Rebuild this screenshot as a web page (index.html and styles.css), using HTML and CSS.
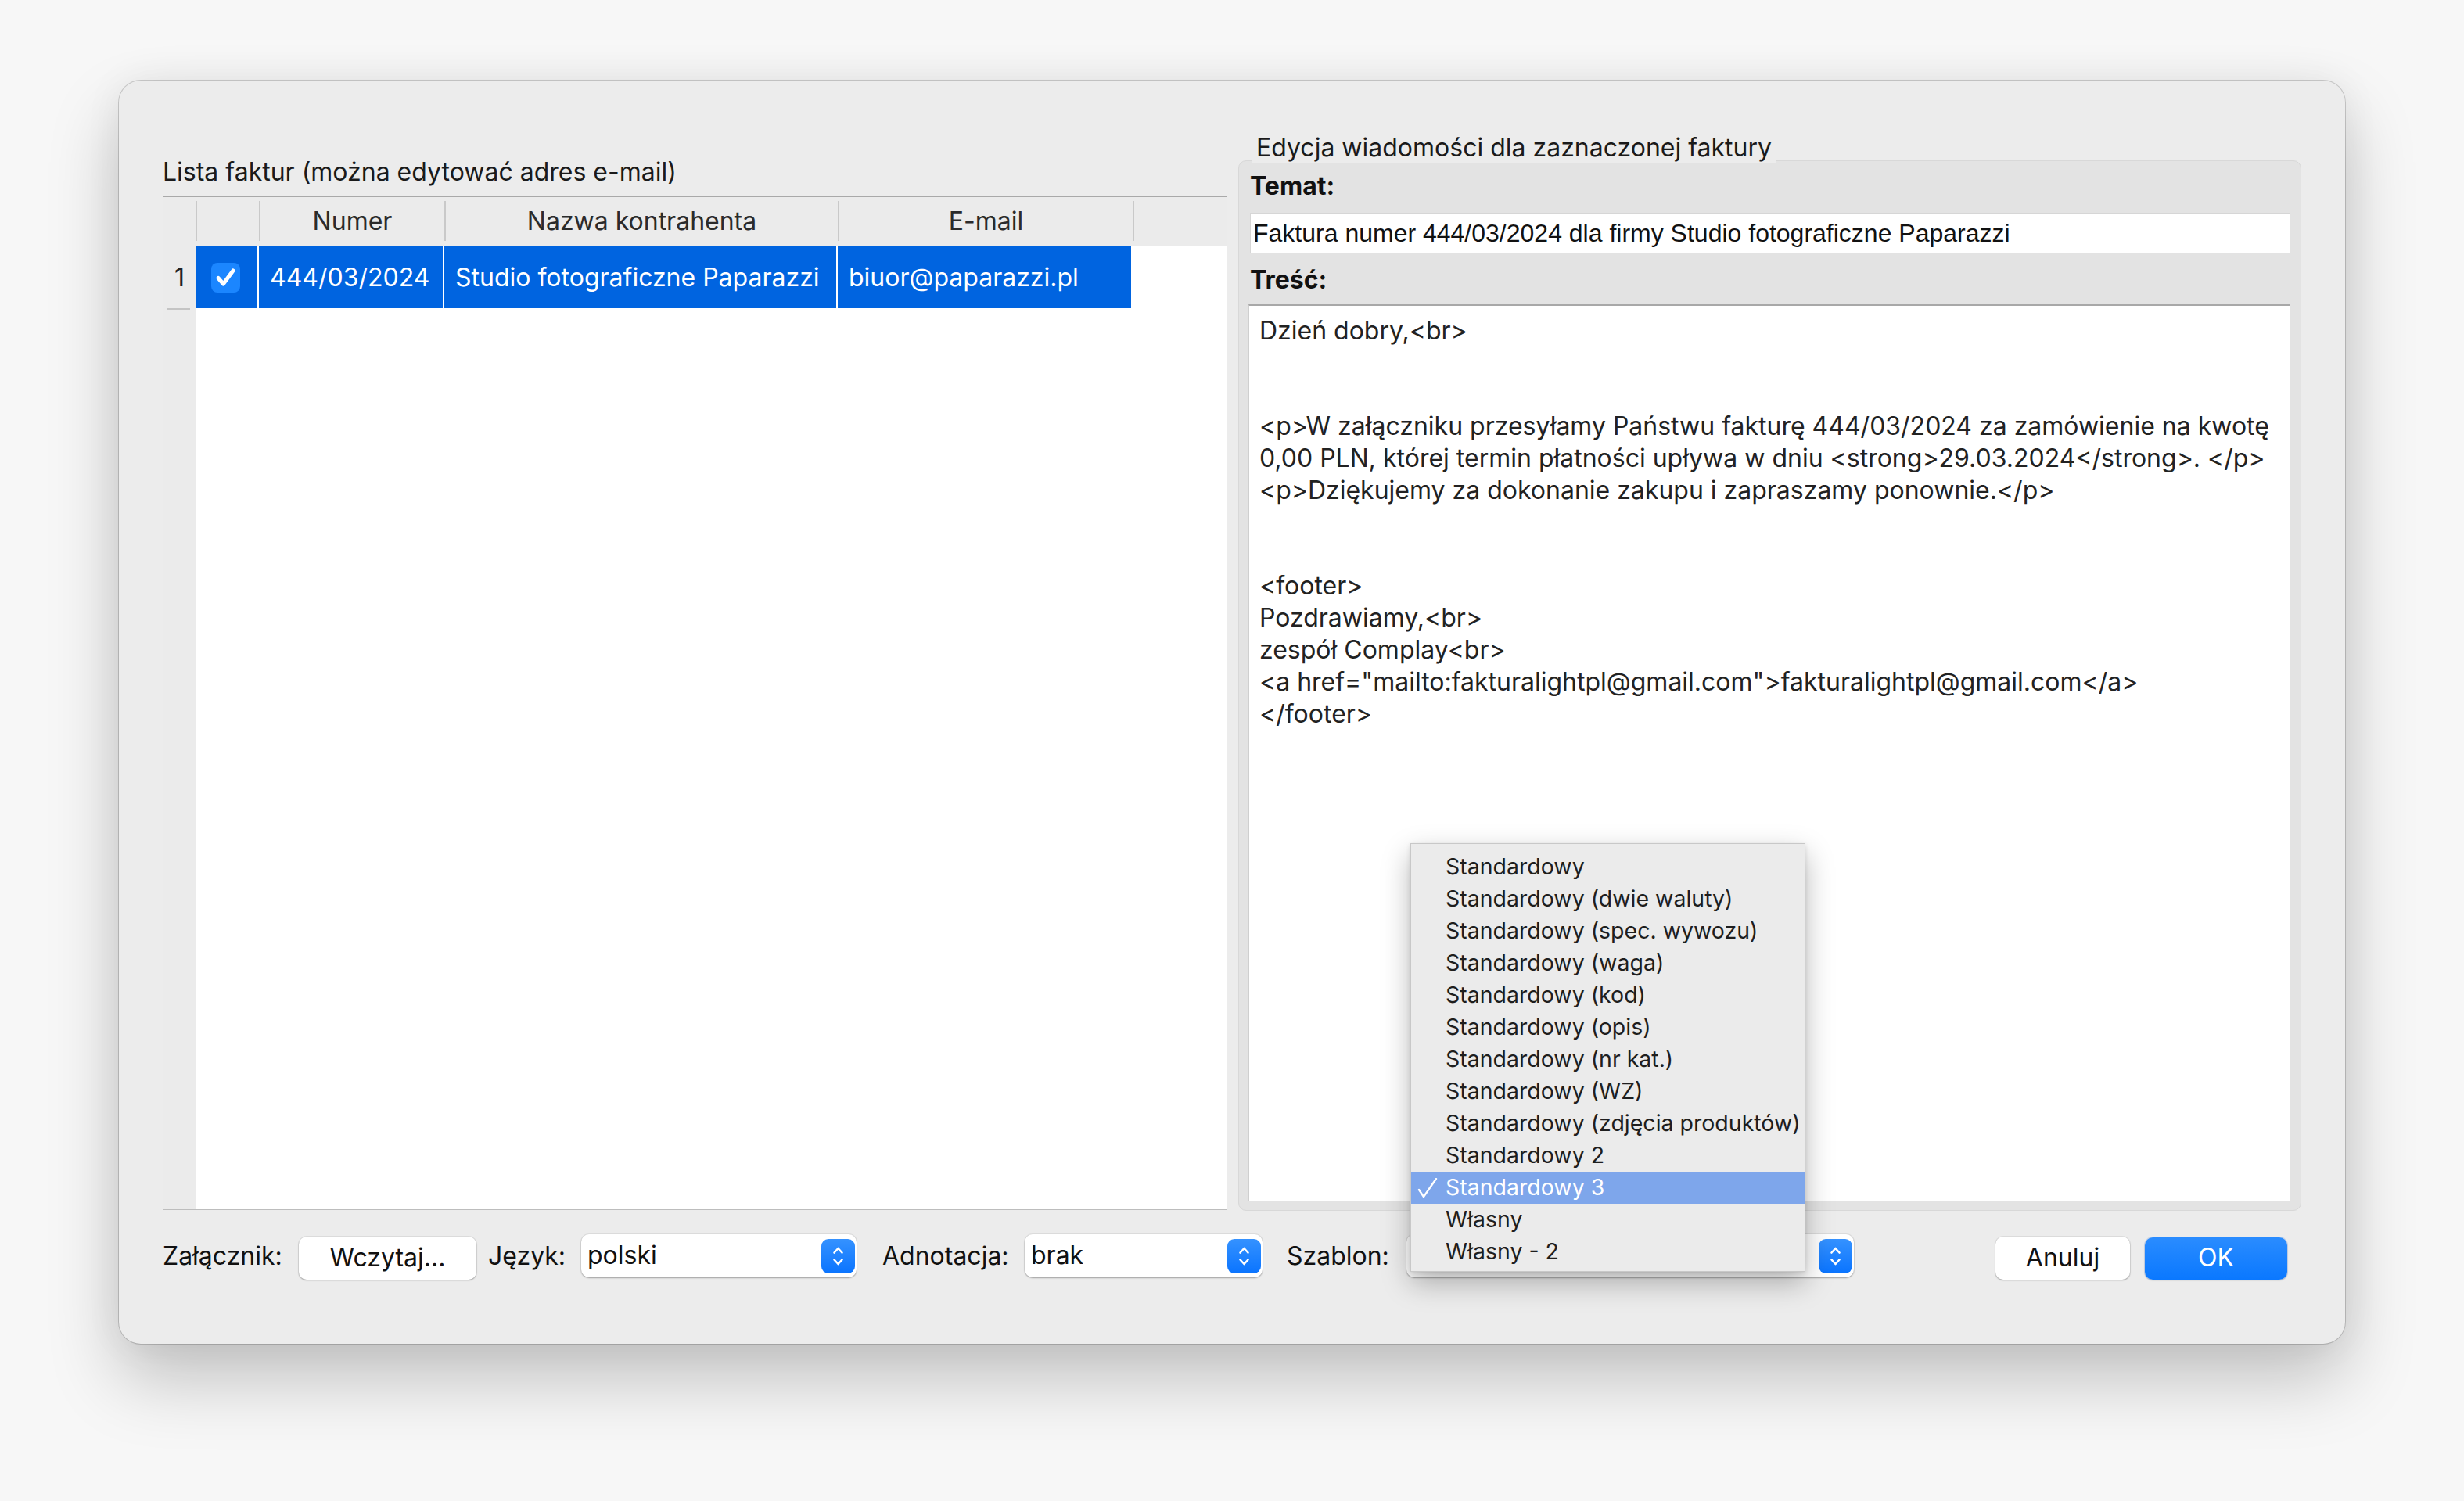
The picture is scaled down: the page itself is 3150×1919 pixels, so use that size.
FILE: index.html
```html
<!DOCTYPE html>
<html lang="pl">
<head>
<meta charset="utf-8">
<title>Wysyłka faktur</title>
<link rel="stylesheet" href="styles.css">
</head>
<body>
<div class="window">
  <div class="main">
    <section class="left">
      <div class="caption">Lista faktur (można edytować adres e-mail)</div>
      <div class="table">
        <div class="rowheads">
          <div class="rh-head"></div>
          <div class="rh-cell">1</div>
          <div class="rh-dash"></div>
        </div>
        <div class="tbody">
          <div class="thead">
            <div class="th c-chk"></div>
            <div class="th c-num">Numer</div>
            <div class="th c-name">Nazwa kontrahenta</div>
            <div class="th c-mail">E-mail</div>
            <div class="th c-rest"></div>
          </div>
          <div class="tr selected">
            <div class="td c-chk">
              <svg class="checkbox" width="37" height="38" viewBox="0 0 37 38"><rect x="0" y="0" width="37" height="38" rx="8" fill="#1b86ff"/><path d="M9 19.5 L15.5 27 L28 10" fill="none" stroke="#fff" stroke-width="5" stroke-linecap="round" stroke-linejoin="round"/></svg>
            </div>
            <div class="td c-num">444/03/2024</div>
            <div class="td c-name">Studio fotograficzne Paparazzi</div>
            <div class="td c-mail">biuor@paparazzi.pl</div>
          </div>
        </div>
      </div>
    </section>
    <section class="right">
      <div class="group-title">Edycja wiadomości dla zaznaczonej faktury</div>
      <div class="group">
        <div class="field-label">Temat:</div>
        <div class="textfield">Faktura numer 444/03/2024 dla firmy Studio fotograficzne Paparazzi</div>
        <div class="field-label second">Treść:</div>
        <div class="textarea">Dzień dobry,&lt;br&gt;


&lt;p&gt;W załączniku przesyłamy Państwu fakturę 444/03/2024 za zamówienie na kwotę
0,00 PLN, której termin płatności upływa w dniu &lt;strong&gt;29.03.2024&lt;/strong&gt;. &lt;/p&gt;
&lt;p&gt;Dziękujemy za dokonanie zakupu i zapraszamy ponownie.&lt;/p&gt;


&lt;footer&gt;
Pozdrawiamy,&lt;br&gt;
zespół Complay&lt;br&gt;
&lt;a href="mailto:fakturalightpl@gmail.com"&gt;fakturalightpl@gmail.com&lt;/a&gt;
&lt;/footer&gt;</div>
      </div>
    </section>
  </div>

  <div class="bottombar">
    <span class="lbl l-att">Załącznik:</span>
    <div class="btn b-load">Wczytaj...</div>
    <span class="lbl l-lang">Język:</span>
    <div class="popup p-lang"><span>polski</span>
      <svg class="stepper" width="43" height="44" viewBox="0 0 43 44"><defs><linearGradient id="sg1" x1="0" y1="0" x2="0" y2="1"><stop offset="0" stop-color="#3592ff"/><stop offset="1" stop-color="#0a74ff"/></linearGradient></defs><rect width="43" height="44" rx="9" fill="url(#sg1)"/><path d="M16.5 17.5 L21.5 12 L26.5 17.5 M16.5 26.5 L21.5 32 L26.5 26.5" fill="none" stroke="#fff" stroke-width="2.6" stroke-linecap="round" stroke-linejoin="round"/></svg>
    </div>
    <span class="lbl l-ann">Adnotacja:</span>
    <div class="popup p-ann"><span>brak</span>
      <svg class="stepper" width="43" height="44" viewBox="0 0 43 44"><defs><linearGradient id="sg2" x1="0" y1="0" x2="0" y2="1"><stop offset="0" stop-color="#3592ff"/><stop offset="1" stop-color="#0a74ff"/></linearGradient></defs><rect width="43" height="44" rx="9" fill="url(#sg2)"/><path d="M16.5 17.5 L21.5 12 L26.5 17.5 M16.5 26.5 L21.5 32 L26.5 26.5" fill="none" stroke="#fff" stroke-width="2.6" stroke-linecap="round" stroke-linejoin="round"/></svg>
    </div>
    <span class="lbl l-tpl">Szablon:</span>
    <div class="popup p-tpl"><span></span>
      <svg class="stepper" width="43" height="44" viewBox="0 0 43 44"><defs><linearGradient id="sg3" x1="0" y1="0" x2="0" y2="1"><stop offset="0" stop-color="#3592ff"/><stop offset="1" stop-color="#0a74ff"/></linearGradient></defs><rect width="43" height="44" rx="9" fill="url(#sg3)"/><path d="M16.5 17.5 L21.5 12 L26.5 17.5 M16.5 26.5 L21.5 32 L26.5 26.5" fill="none" stroke="#fff" stroke-width="2.6" stroke-linecap="round" stroke-linejoin="round"/></svg>
    </div>
    <div class="spacer"></div>
    <div class="btn b-cancel">Anuluj</div>
    <div class="btn b-ok">OK</div>
  </div>

  <div class="menu">
    <div class="item">Standardowy</div>
    <div class="item">Standardowy (dwie waluty)</div>
    <div class="item">Standardowy (spec. wywozu)</div>
    <div class="item">Standardowy (waga)</div>
    <div class="item">Standardowy (kod)</div>
    <div class="item">Standardowy (opis)</div>
    <div class="item">Standardowy (nr kat.)</div>
    <div class="item">Standardowy (WZ)</div>
    <div class="item">Standardowy (zdjęcia produktów)</div>
    <div class="item">Standardowy 2</div>
    <div class="item active"><svg class="tick" width="26" height="26" viewBox="0 0 26 26"><path d="M2 15 L8 24 L24 1" fill="none" stroke="#fff" stroke-width="2.4" stroke-linecap="round" stroke-linejoin="round"/></svg>Standardowy 3</div>
    <div class="item">Własny</div>
    <div class="item">Własny - 2</div>
  </div>
</div>
</body>
</html>
```
FILE: styles.css
```css
html, body {
  margin: 0;
  background: #f7f7f7;
}
body {
  padding: 103px 0 0 152px;
  height: 1919px;
  box-sizing: border-box;
  font-family: Inter, "Liberation Sans", sans-serif;
  font-size: 32px;
  color: #1c1c1c;
  overflow: hidden;
}
.window {
  position: relative;
  width: 2846px;
  height: 1615px;
  box-sizing: border-box;
  padding: 66px 56px 0 56px;
  background: #ececec;
  border-radius: 28px;
  box-shadow: 0 0 0 1px rgba(0,0,0,0.17), 0 45px 90px rgba(0,0,0,0.22), 0 0 50px rgba(0,0,0,0.06);
}
.main {
  display: flex;
  gap: 14px;
  height: 1379px;
}
.left {
  width: 1361px;
  padding-top: 31px;
  display: flex;
  flex-direction: column;
}
.caption {
  line-height: 40px;
  height: 40px;
  white-space: nowrap;
  color: #1a1a1a;
}
.table {
  margin-top: 11px;
  height: 1296px;
  box-sizing: border-box;
  border: 1px solid #bdbdbd;
  border-top-color: #a9a9a9;
  display: flex;
  background: #fff;
}
.rowheads {
  width: 41px;
  background: #ebebeb;
  display: flex;
  flex-direction: column;
}
.rh-head { height: 63px; }
.rh-cell {
  height: 79px;
  line-height: 79px;
  text-align: center;
  color: #222;
}
.rh-dash {
  width: 30px;
  height: 2px;
  margin-left: 4px;
  background: #c4c4c4;
}
.tbody {
  flex: 1;
  display: flex;
  flex-direction: column;
}
.thead {
  height: 63px;
  background: #ebebeb;
  display: flex;
  align-items: flex-start;
}
.th {
  box-sizing: border-box;
  margin-top: 5px;
  height: 51px;
  line-height: 51px;
  border-left: 2px solid #c9c9c9;
  text-align: center;
  color: #2b2b2b;
  white-space: nowrap;
}
.c-chk { width: 81px; }
.c-num { width: 237px; }
.c-name { width: 503px; }
.c-mail { width: 377px; }
.c-rest { flex: 1; }
.tr {
  height: 79px;
  display: flex;
}
.td {
  box-sizing: border-box;
  height: 79px;
  line-height: 79px;
  background: #0064e0;
  color: #fff;
  border-right: 2px solid #fff;
  padding-left: 14px;
  white-space: nowrap;
  overflow: hidden;
}
.td.c-chk {
  padding-left: 20px;
  display: flex;
  align-items: center;
}
.checkbox { display: block; }

.right {
  width: 1359px;
  display: flex;
  flex-direction: column;
}
.group-title {
  position: relative;
  z-index: 1;
  align-self: flex-start;
  margin-left: 17px;
  padding: 0 6px 0 6px;
  height: 40px;
  line-height: 40px;
  background: #ececec;
  white-space: nowrap;
  color: #1a1a1a;
}
.group {
  margin-top: -4px;
  height: 1343px;
  box-sizing: border-box;
  border: 1px solid #d8d8d8;
  border-radius: 10px;
  background: #e3e3e3;
  padding: 12px 13px 11px 14px;
  display: flex;
  flex-direction: column;
}
.field-label {
  height: 40px;
  line-height: 40px;
  font-weight: 700;
  color: #111;
}
.field-label.second { margin-top: 14px; }
.textfield {
  margin-top: 14px;
  height: 52px;
  box-sizing: border-box;
  background: #fff;
  border: 1px solid #d6d6d6;
  border-bottom-color: #bdbdbd;
  padding-left: 3px;
  line-height: 50px;
  white-space: nowrap;
  font-family: "Liberation Sans", Arial, sans-serif;
  color: #111;
}
.textarea {
  margin-top: 11px;
  margin-left: -2px;
  flex: 1;
  background: #fff;
  border: 1px solid #cfcfcf;
  border-top: 2px solid #a8a8a8;
  padding: 12px 14px 0 13px;
  line-height: 40.8px;
  white-space: pre;
  color: #222;
  overflow: hidden;
}

.bottombar {
  margin-top: 30px;
  height: 58px;
  display: flex;
  align-items: flex-start;
}
.lbl {
  flex: none;
  height: 58px;
  line-height: 56px;
  white-space: nowrap;
  color: #111;
}
.l-att { width: 174px; }
.l-lang { width: 119px; margin-left: 15px; }
.l-ann { width: 182px; margin-left: 33px; }
.l-tpl { width: 153px; margin-left: 31px; }
.btn {
  flex: none;
  box-sizing: border-box;
  height: 55px;
  line-height: 53px;
  margin-top: 3px;
  text-align: center;
  background: #fff;
  border-radius: 10px;
  box-shadow: 0 0 0 1px rgba(0,0,0,0.06), 0 1px 2px rgba(0,0,0,0.28);
  color: #111;
  white-space: nowrap;
}
.b-load { width: 227px; }
.b-cancel { width: 172px; }
.b-ok {
  width: 182px;
  margin-left: 19px;
  margin-right: 18px;
  height: 54px;
  line-height: 52px;
  margin-top: 4px;
  color: #fff;
  background: linear-gradient(#2a8cff, #0a78ff);
  box-shadow: 0 0 0 1px rgba(0,90,220,0.15), 0 1px 2px rgba(0,0,0,0.2);
}
.spacer { flex: 1; }
.popup {
  flex: none;
  box-sizing: border-box;
  height: 55px;
  background: #fff;
  border-radius: 10px;
  box-shadow: 0 0 0 1px rgba(0,0,0,0.06), 0 1px 2px rgba(0,0,0,0.28);
  display: flex;
  align-items: center;
  justify-content: space-between;
  padding: 0 2px 0 8px;
  white-space: nowrap;
  color: #111;
}
.popup span { margin-top: -2px; }
.stepper { display: block; flex: none; }
.p-lang { width: 352px; }
.p-ann { width: 304px; }
.p-tpl { width: 572px; }

.menu {
  position: absolute;
  left: 1651px;
  top: 975px;
  width: 505px;
  height: 548px;
  box-sizing: border-box;
  padding-top: 9px;
  background: #ebebeb;
  border: 1px solid #c8c8c8;
  box-shadow: 0 14px 34px rgba(0,0,0,0.28), 0 2px 6px rgba(0,0,0,0.12);
  z-index: 5;
}
.item {
  position: relative;
  height: 41px;
  line-height: 39px;
  padding-left: 44px;
  font-size: 28.5px;
  white-space: nowrap;
  color: #1e1e1e;
}
.item.active {
  background: #7ea6eb;
  color: #fff;
}
.tick {
  position: absolute;
  left: 8px;
  top: 8px;
}
```
